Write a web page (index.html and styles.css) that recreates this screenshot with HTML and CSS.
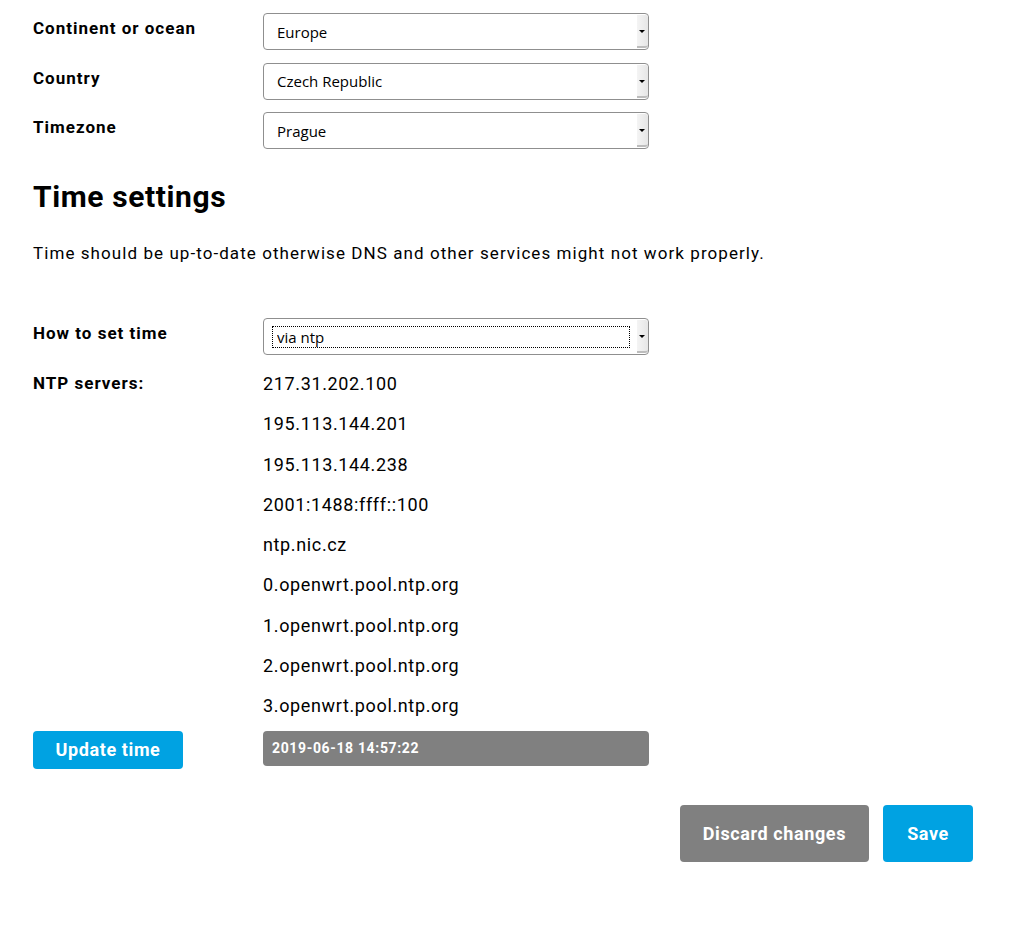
FILE: index.html
```html
<!DOCTYPE html>
<html>
<head>
<meta charset="utf-8">
<link rel="stylesheet" href="styles.css">
</head>
<body>
<div class="page">
  <div class="form">
    <label class="label">Continent or ocean</label>
    <div class="field"><span class="select-wrap"><select class="select"><option>Europe</option></select></span></div>
    <label class="label">Country</label>
    <div class="field"><span class="select-wrap"><select class="select"><option>Czech Republic</option></select></span></div>
    <label class="label">Timezone</label>
    <div class="field"><span class="select-wrap"><select class="select"><option>Prague</option></select></span></div>
  </div>

  <h2 class="heading">Time settings</h2>
  <p class="intro">Time should be up-to-date otherwise DNS and other services might not work properly.</p>

  <div class="form form-time">
    <label class="label">How to set time</label>
    <div class="field"><span class="select-wrap"><select class="select focused"><option>via ntp</option></select><span class="focus-ring"></span></span></div>
    <label class="label label-ntp">NTP servers:</label>
    <ul class="ntp-list">
      <li>217.31.202.100</li>
      <li>195.113.144.201</li>
      <li>195.113.144.238</li>
      <li>2001:1488:ffff::100</li>
      <li>ntp.nic.cz</li>
      <li>0.openwrt.pool.ntp.org</li>
      <li>1.openwrt.pool.ntp.org</li>
      <li>2.openwrt.pool.ntp.org</li>
      <li>3.openwrt.pool.ntp.org</li>
    </ul>
    <div class="update-cell"><button class="btn btn-primary btn-update">Update time</button></div>
    <div class="time-box">2019-06-18 14:57:22</div>
  </div>

  <div class="actions">
    <button class="btn btn-secondary btn-big">Discard changes</button>
    <button class="btn btn-primary btn-big btn-save">Save</button>
  </div>
</div>
</body>
</html>
```

FILE: styles.css
```css
html, body {
  margin: 0;
  padding: 0;
  background: #fff;
}
body {
  font-family: Roboto, "Liberation Sans", sans-serif;
  color: #000;
}
.page {
  padding: 13px 40px 40px 33px;
}
.form {
  display: grid;
  grid-template-columns: 230px 386px;
  row-gap: 12.5px;
  align-items: start;
}
.label {
  font-size: 17px;
  font-weight: 700;
  line-height: 20px;
  letter-spacing: 1px;
  padding-top: 5px;
}
.select-wrap {
  position: relative;
  display: block;
  width: 386px;
  height: 37px;
}
.select {
  -webkit-appearance: none;
  appearance: none;
  display: block;
  box-sizing: border-box;
  width: 386px;
  height: 37px;
  margin: 0;
  padding: 0 14px 0 13px;
  border: 1px solid #8f8f8f;
  border-radius: 4px;
  background: #fff;
  font-family: "Open Sans", "DejaVu Sans", sans-serif;
  font-size: 15px;
  color: #000;
  outline: none;
}
.select-wrap::after {
  content: "";
  position: absolute;
  top: 2px;
  right: 1px;
  bottom: 2px;
  width: 11px;
  background: linear-gradient(to right, #f4f4f4, #e6e6e6);
  border-bottom: 2px solid #bdbdbd;
  border-top-right-radius: 3px;
  border-bottom-right-radius: 3px;
  pointer-events: none;
}
.select-wrap::before {
  content: "";
  position: absolute;
  right: 4px;
  top: 17px;
  width: 0;
  height: 0;
  border-left: 3px solid transparent;
  border-right: 3px solid transparent;
  border-top: 3px solid #000;
  z-index: 2;
  pointer-events: none;
}
.focus-ring {
  position: absolute;
  left: 9px;
  top: 8px;
  width: 356px;
  height: 20px;
  border: 1px dotted #000;
  pointer-events: none;
}
.heading {
  margin: 30px 0 0 0;
  font-size: 30px;
  font-weight: 700;
  line-height: 36px;
  letter-spacing: 0.6px;
}
.intro {
  margin: 26px 0 0 0;
  font-size: 17px;
  line-height: 24px;
  letter-spacing: 1.07px;
}
.form-time {
  margin-top: 53px;
  row-gap: 12px;
}
.ntp-list {
  list-style: none;
  margin: -3px 0 0 0;
  padding: 0;
  font-size: 18px;
  line-height: 40.3px;
  letter-spacing: 0.64px;
}
.label-ntp {
  padding-top: 6px;
}
.update-cell {
  margin-top: -8px;
}
.btn {
  border: none;
  border-radius: 4px;
  color: #fff;
  font-family: Roboto, "Liberation Sans", sans-serif;
  font-weight: 700;
  font-size: 18px;
  letter-spacing: 0.6px;
  cursor: pointer;
}
.btn-primary {
  background: #00a2e2;
}
.btn-secondary {
  background: #808080;
}
.btn-update {
  width: 150px;
  height: 38px;
  padding: 0;
}
.time-box {
  margin-top: -8px;
  box-sizing: border-box;
  height: 35px;
  width: 386px;
  background: #808080;
  border-radius: 4px;
  color: #fff;
  font-weight: 700;
  font-size: 14px;
  letter-spacing: 0.65px;
  line-height: 35px;
  padding-left: 9px;
}
.actions {
  display: flex;
  justify-content: flex-end;
  gap: 14px;
  margin-top: 36px;
}
.btn-big {
  height: 57px;
  padding: 0 23px;
}
.btn-save {
  width: 90px;
  padding: 0;
}
```
